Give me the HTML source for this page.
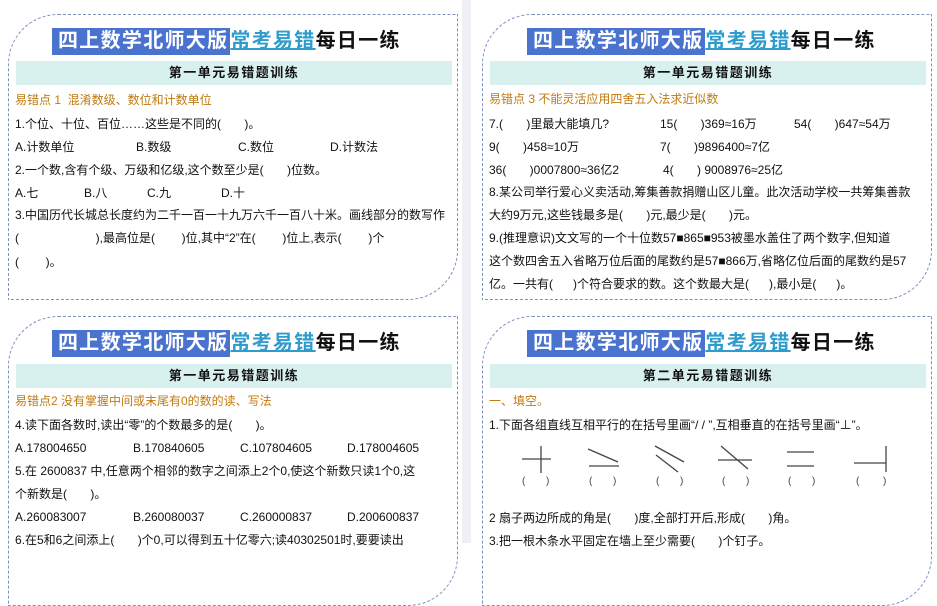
<!DOCTYPE html>
<html><head><meta charset="utf-8"><style>
*{margin:0;padding:0;box-sizing:border-box}
body{width:937px;height:543px;overflow:hidden;background:#fff;position:relative;font-family:"Liberation Sans","Noto Sans CJK SC",sans-serif;color:#111}
.strip{position:absolute;left:462px;top:0;width:9px;height:543px;background:#eef0f3}
.card{position:absolute;border:1.5px dashed #7f8fc2;border-radius:50px 0 50px 0}
.t{position:absolute;font-size:12px;white-space:nowrap;line-height:14px;letter-spacing:0}
.o{color:#c07a10}
.title{position:absolute;height:27px;font-size:20px;font-weight:bold;white-space:nowrap;line-height:27px;letter-spacing:1.3px}
.title .b{background:#4a72cf;color:#fff;padding:0 2px 0 6px;display:inline-block}
.title .c{color:#2e9ccc;text-decoration:underline;text-decoration-thickness:2px}
.ban{position:absolute;height:24px;background:#d8f0ee;font-size:13px;font-weight:bold;text-align:center;line-height:24px;letter-spacing:1.5px}
</style></head><body>
<div class="strip"></div>

<!-- top-left -->
<div class="card" style="left:8px;top:14px;width:450px;height:286px"></div>
<div class="title" style="left:52px;top:28px"><span class="b">四上数学北师大版</span><span class="c">常考易错</span>每日一练</div>
<div class="ban" style="left:16px;top:61px;width:436px">第一单元易错题训练</div>
<div class="t o" style="left:15px;top:93px">易错点 1 &nbsp;混淆数级、数位和计数单位</div>
<div class="t" style="left:15px;top:117px">1.个位、十位、百位……这些是不同的(&nbsp;&nbsp;&nbsp;&nbsp;&nbsp;&nbsp;&nbsp;)。</div>
<div class="t" style="left:15px;top:140px">A.计数单位</div>
<div class="t" style="left:136px;top:140px">B.数级</div>
<div class="t" style="left:238px;top:140px">C.数位</div>
<div class="t" style="left:330px;top:140px">D.计数法</div>
<div class="t" style="left:15px;top:163px">2.一个数,含有个级、万级和亿级,这个数至少是(&nbsp;&nbsp;&nbsp;&nbsp;&nbsp;&nbsp;&nbsp;)位数。</div>
<div class="t" style="left:15px;top:186px">A.七</div>
<div class="t" style="left:84px;top:186px">B.八</div>
<div class="t" style="left:147px;top:186px">C.九</div>
<div class="t" style="left:221px;top:186px">D.十</div>
<div class="t" style="left:15px;top:208px">3.中国历代长城总长度约为二千一百一十九万六千一百八十米。画线部分的数写作</div>
<div class="t" style="left:15px;top:231px">(&nbsp;&nbsp;&nbsp;&nbsp;&nbsp;&nbsp;&nbsp;&nbsp;&nbsp;&nbsp;&nbsp;&nbsp;&nbsp;&nbsp;&nbsp;&nbsp;&nbsp;&nbsp;&nbsp;&nbsp;&nbsp;&nbsp;&nbsp;),最高位是(&nbsp;&nbsp;&nbsp;&nbsp;&nbsp;&nbsp;&nbsp;&nbsp;)位,其中“2”在(&nbsp;&nbsp;&nbsp;&nbsp;&nbsp;&nbsp;&nbsp;&nbsp;)位上,表示(&nbsp;&nbsp;&nbsp;&nbsp;&nbsp;&nbsp;&nbsp;&nbsp;)个</div>
<div class="t" style="left:15px;top:255px">(&nbsp;&nbsp;&nbsp;&nbsp;&nbsp;&nbsp;&nbsp;&nbsp;)。</div>

<!-- top-right -->
<div class="card" style="left:482px;top:14px;width:450px;height:286px"></div>
<div class="title" style="left:527px;top:28px"><span class="b">四上数学北师大版</span><span class="c">常考易错</span>每日一练</div>
<div class="ban" style="left:490px;top:61px;width:436px">第一单元易错题训练</div>
<div class="t o" style="left:489px;top:92px">易错点 3 不能灵活应用四舍五入法求近似数</div>
<div class="t" style="left:489px;top:117px">7.(&nbsp;&nbsp;&nbsp;&nbsp;&nbsp;&nbsp;&nbsp;)里最大能填几?</div>
<div class="t" style="left:660px;top:117px">15(&nbsp;&nbsp;&nbsp;&nbsp;&nbsp;&nbsp;&nbsp;)369≈16万</div>
<div class="t" style="left:794px;top:117px">54(&nbsp;&nbsp;&nbsp;&nbsp;&nbsp;&nbsp;&nbsp;)647≈54万</div>
<div class="t" style="left:489px;top:140px">9(&nbsp;&nbsp;&nbsp;&nbsp;&nbsp;&nbsp;&nbsp;)458≈10万</div>
<div class="t" style="left:660px;top:140px">7(&nbsp;&nbsp;&nbsp;&nbsp;&nbsp;&nbsp;&nbsp;)9896400≈7亿</div>
<div class="t" style="left:489px;top:163px">36(&nbsp;&nbsp;&nbsp;&nbsp;&nbsp;&nbsp;&nbsp;)0007800≈36亿2</div>
<div class="t" style="left:663px;top:163px">4(&nbsp;&nbsp;&nbsp;&nbsp;&nbsp;&nbsp;&nbsp;) 9008976≈25亿</div>
<div class="t" style="left:489px;top:185px">8.某公司举行爱心义卖活动,筹集善款捐赠山区儿童。此次活动学校一共筹集善款</div>
<div class="t" style="left:489px;top:208px">大约9万元,这些钱最多是(&nbsp;&nbsp;&nbsp;&nbsp;&nbsp;&nbsp;&nbsp;)元,最少是(&nbsp;&nbsp;&nbsp;&nbsp;&nbsp;&nbsp;&nbsp;)元。</div>
<div class="t" style="left:489px;top:231px">9.(推理意识)文文写的一个十位数57■865■953被墨水盖住了两个数字,但知道</div>
<div class="t" style="left:489px;top:254px">这个数四舍五入省略万位后面的尾数约是57■866万,省略亿位后面的尾数约是57</div>
<div class="t" style="left:489px;top:277px">亿。一共有(&nbsp;&nbsp;&nbsp;&nbsp;&nbsp;&nbsp;)个符合要求的数。这个数最大是(&nbsp;&nbsp;&nbsp;&nbsp;&nbsp;&nbsp;),最小是(&nbsp;&nbsp;&nbsp;&nbsp;&nbsp;&nbsp;)。</div>

<!-- bottom-left -->
<div class="card" style="left:8px;top:316px;width:450px;height:290px"></div>
<div class="title" style="left:52px;top:330px"><span class="b">四上数学北师大版</span><span class="c">常考易错</span>每日一练</div>
<div class="ban" style="left:16px;top:364px;width:436px">第一单元易错题训练</div>
<div class="t o" style="left:15px;top:394px">易错点2 没有掌握中间或末尾有0的数的读、写法</div>
<div class="t" style="left:15px;top:418px">4.读下面各数时,读出“零”的个数最多的是(&nbsp;&nbsp;&nbsp;&nbsp;&nbsp;&nbsp;&nbsp;)。</div>
<div class="t" style="left:15px;top:441px">A.178004650</div>
<div class="t" style="left:133px;top:441px">B.170840605</div>
<div class="t" style="left:240px;top:441px">C.107804605</div>
<div class="t" style="left:347px;top:441px">D.178004605</div>
<div class="t" style="left:15px;top:464px">5.在 2600837 中,任意两个相邻的数字之间添上2个0,使这个新数只读1个0,这</div>
<div class="t" style="left:15px;top:487px">个新数是(&nbsp;&nbsp;&nbsp;&nbsp;&nbsp;&nbsp;&nbsp;)。</div>
<div class="t" style="left:15px;top:510px">A.260083007</div>
<div class="t" style="left:133px;top:510px">B.260080037</div>
<div class="t" style="left:240px;top:510px">C.260000837</div>
<div class="t" style="left:347px;top:510px">D.200600837</div>
<div class="t" style="left:15px;top:533px">6.在5和6之间添上(&nbsp;&nbsp;&nbsp;&nbsp;&nbsp;&nbsp;&nbsp;)个0,可以得到五十亿零六;读40302501时,要要读出</div>

<!-- bottom-right -->
<div class="card" style="left:482px;top:316px;width:450px;height:290px"></div>
<div class="title" style="left:527px;top:330px"><span class="b">四上数学北师大版</span><span class="c">常考易错</span>每日一练</div>
<div class="ban" style="left:490px;top:364px;width:436px">第二单元易错题训练</div>
<div class="t o" style="left:489px;top:394px">一、填空。</div>
<div class="t" style="left:489px;top:418px">1.下面各组直线互相平行的在括号里画“/ / ”,互相垂直的在括号里画“⊥”。</div>
<svg style="position:absolute;left:0;top:0" width="937" height="543">
<g stroke="#444" stroke-width="1.3" fill="none">
<line x1="522" y1="459" x2="551" y2="459"/><line x1="541" y1="446" x2="541" y2="473"/>
<line x1="588" y1="449" x2="618" y2="462"/><line x1="589" y1="466" x2="619" y2="466"/>
<line x1="655" y1="446" x2="684" y2="462"/><line x1="656" y1="455" x2="678" y2="472"/>
<line x1="721" y1="446" x2="748" y2="469"/><line x1="718" y1="460" x2="752" y2="460"/>
<line x1="787" y1="452" x2="814" y2="452"/><line x1="787" y1="466" x2="814" y2="466"/>
<line x1="854" y1="463" x2="886" y2="463"/><line x1="886" y1="446" x2="886" y2="472"/>
</g>
<g font-size="10" fill="#444" font-family="Liberation Sans,sans-serif">
<text x="522" y="484">(</text><text x="546" y="484">)</text>
<text x="589" y="484">(</text><text x="613" y="484">)</text>
<text x="656" y="484">(</text><text x="680" y="484">)</text>
<text x="722" y="484">(</text><text x="746" y="484">)</text>
<text x="788" y="484">(</text><text x="812" y="484">)</text>
<text x="856" y="484">(</text><text x="883" y="484">)</text>
</g></svg>
<div class="t" style="left:489px;top:511px">2 扇子两边所成的角是(&nbsp;&nbsp;&nbsp;&nbsp;&nbsp;&nbsp;&nbsp;)度,全部打开后,形成(&nbsp;&nbsp;&nbsp;&nbsp;&nbsp;&nbsp;&nbsp;)角。</div>
<div class="t" style="left:489px;top:534px">3.把一根木条水平固定在墙上至少需要(&nbsp;&nbsp;&nbsp;&nbsp;&nbsp;&nbsp;&nbsp;)个钉子。</div>
</body></html>
